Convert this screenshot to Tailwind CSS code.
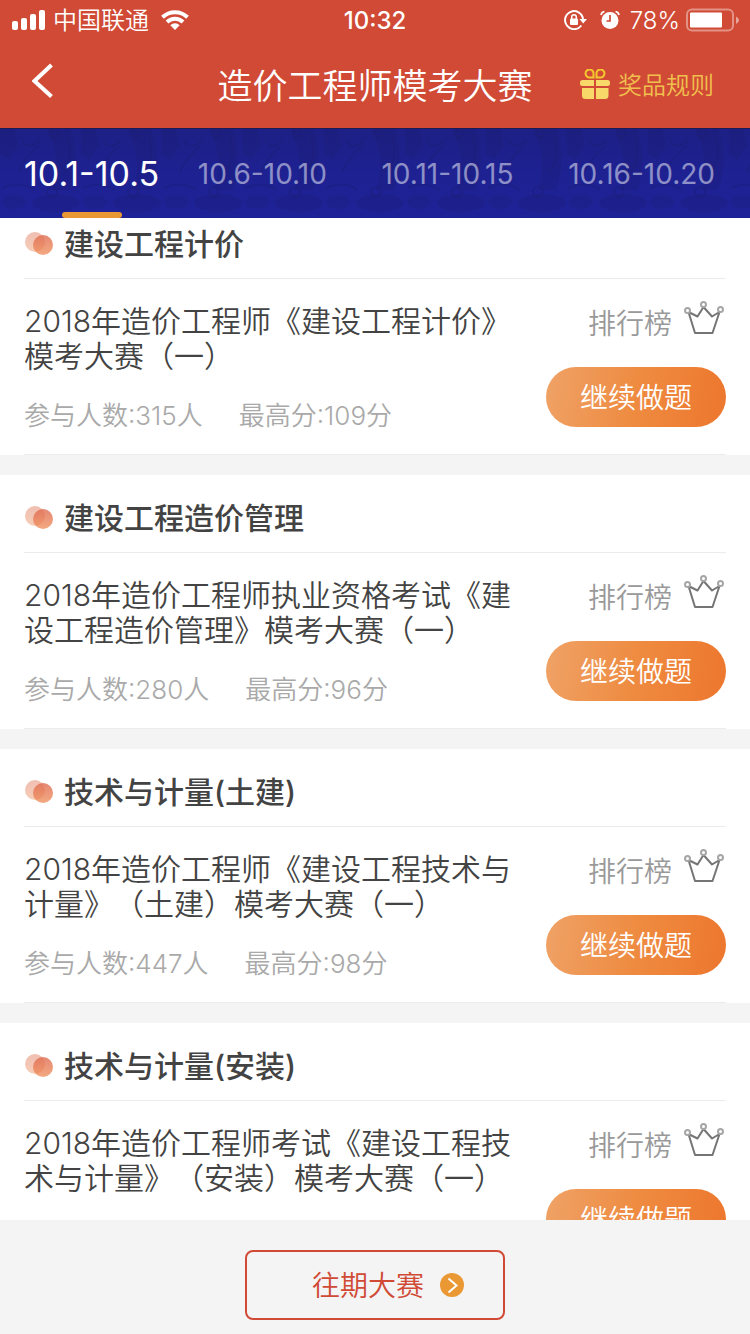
<!DOCTYPE html>
<html lang="zh-CN">
<head>
<meta charset="utf-8">
<meta name="viewport" content="width=device-width, initial-scale=1">
<title>造价工程师模考大赛</title>
<script src="https://cdn.jsdelivr.net/npm/@tailwindcss/browser@4"></script>
</head>
<body class="flex h-screen flex-col bg-[#f4f4f4] font-['Inter','Noto_Sans_CJK_SC',sans-serif] font-[350] text-[#434343] [text-spacing-trim:space-all]">

<svg class="absolute h-0 w-0" aria-hidden="true">
  <defs>
    <linearGradient id="dotA" x2="0" y2="1"><stop stop-color="#f0bfb3"/><stop offset="1" stop-color="#f6cdb6"/></linearGradient>
    <linearGradient id="dotB" x2="0" y2="1"><stop stop-color="#df6a50" stop-opacity=".8"/><stop offset="1" stop-color="#ef8b55" stop-opacity=".75"/></linearGradient>
  </defs>
  <symbol id="crown" viewBox="0 0 40 36">
    <g fill="none" stroke="#757575" stroke-width="2" stroke-linejoin="round">
      <path d="M4.500 12 L11 33 H28.500 L35.500 12 L28 16.500 L19.500 7 L13.500 16.500 Z"/>
      <g stroke="#a6a6a6" fill="#fff"><circle cx="3.500" cy="10.500" r="2.500"/><circle cx="19.500" cy="4.500" r="2.500"/><circle cx="36.500" cy="9.500" r="2.500"/></g>
    </g>
  </symbol>
  <symbol id="dots" viewBox="0 0 29 24">
    <circle cx="11" cy="10" r="10" fill="url(#dotA)"/><circle cx="19" cy="13" r="10" fill="url(#dotB)"/>
  </symbol>
</svg>

<header class="shrink-0 bg-[#d04a35] text-white">
  <div class="grid h-10 grid-cols-[1fr_auto_1fr] items-center px-3">
    <div class="flex items-center gap-2">
      <svg class="h-5 w-[33px]" viewBox="0 0 33 20" fill="#fff"><rect y="11" width="6" height="9" rx="2"/><rect x="9" y="8" width="6" height="12" rx="2"/><rect x="18" y="4" width="6" height="16" rx="2"/><rect x="27" width="6" height="20" rx="2"/></svg>
      <span class="pt-0.5 text-2xl">中国联通</span>
      <svg class="ml-1 h-5 w-7" viewBox="0 0 28 20" fill="none" stroke="#fff" stroke-width="4"><path d="M1.500 7.200 A18 18 0 0 1 26.500 7.200"/><path d="M6 12 A11.500 11.500 0 0 1 22 12"/><path d="M14 20 L9.300 15.200 A6.800 6.800 0 0 1 18.700 15.200 Z" fill="#fff" stroke="none"/></svg>
    </div>
    <span class="pt-0.5 text-2xl font-medium">10:32</span>
    <div class="flex items-center justify-end">
      <svg class="h-5 w-6" viewBox="0 0 24 20"><path d="M17.300 15.500 A9 9 0 1 1 19 9" fill="none" stroke="#fff" stroke-width="2"/><path d="M15.500 9 H23 L19.200 13.500 Z" fill="#fff"/><rect x="6" y="8.500" width="8" height="6.500" rx="1" fill="#fff"/><path d="M7.700 9 V7 a2.300 2.300 0 0 1 4.600 0 V9" fill="none" stroke="#fff" stroke-width="1.500"/></svg>
      <svg class="ml-3 h-5 w-5" viewBox="0 0 20 20"><circle cx="10" cy="10.500" r="8.500" fill="#fff"/><path d="M10 5 V11 H6.500" fill="none" stroke="#d04a35" stroke-width="1.700"/><path d="M1 5 Q1.500 2 4.500 1.500 M19 5 Q18.500 2 15.500 1.500" fill="none" stroke="#fff" stroke-width="1.700"/></svg>
      <span class="ml-2.5 pt-0.5 text-2xl">78%</span>
      <svg class="ml-1.5 -mr-px h-6 w-[53px] shrink-0" viewBox="0 0 53 24"><rect x="1" y="1.500" width="46" height="21" rx="5" fill="none" stroke="#fff" stroke-opacity=".4" stroke-width="2"/><rect x="4" y="4.500" width="32" height="15" rx="1" fill="#fff"/><path d="M50 8.500 q3 1.500 3 3.800 t-3 3.700 z" fill="#fff" fill-opacity=".5"/></svg>
    </div>
  </div>
  <div class="grid h-[88px] grid-cols-[1fr_auto_1fr] items-center px-8 pt-1">
    <button type="button" aria-label="返回" class="mb-3 w-6"><svg class="h-9 w-6" viewBox="0 0 24 36" fill="none" stroke="#fff" stroke-width="4"><path d="M19.500 3 L2.500 19 L19.500 34.500"/></svg></button>
    <h1 class="text-[35px]">造价工程师模考大赛</h1>
    <a href="#rules" class="flex items-center justify-end gap-2 pr-1 text-2xl whitespace-nowrap text-[#f0c04e]">
      <svg class="mb-1 h-[30px] w-[30px] shrink-0" viewBox="0 0 30 30"><g fill="#f8d868"><path d="M2.500 11 H14 V17 H2.500 A2.500 2.500 0 0 1 0 14.500 V13.500 A2.500 2.500 0 0 1 2.500 11 Z M16 11 H27.500 A2.500 2.500 0 0 1 30 13.500 V14.500 A2.500 2.500 0 0 1 27.500 17 H16 Z M2 19 H14 V30 H5.500 A3.500 3.500 0 0 1 2 26.500 Z M16 19 H28.500 V26.500 A3.500 3.500 0 0 1 25 30 H16 Z"/></g><g fill="none" stroke="#f5c72e" stroke-width="2"><path d="M13.500 8.500 V5 A4 4 0 1 0 9.500 8.500 Z M16.500 8.500 V5 A4 4 0 1 1 20.500 8.500 Z"/></g></svg>
      奖品规则
    </a>
  </div>
</header>

<nav class="relative h-[90px] shrink-0 bg-[#1e2299] text-white/50">
  <svg class="absolute inset-0 h-full w-full" aria-hidden="true">
    <defs>
      <linearGradient id="shade" x2="0" y2="1"><stop stop-color="#1b1c66" stop-opacity=".4"/><stop offset=".5" stop-color="#1b1c66" stop-opacity=".15"/><stop offset="1" stop-color="#1b1c66" stop-opacity=".05"/></linearGradient>
      <pattern id="wave" width="81" height="90" patternUnits="userSpaceOnUse">
        <path d="M47 0 H70 Q82 30 70 62 H52 Q62 30 47 0 Z M0 0 H14 L18 18 L8 32 L0 26 Z" fill="#1b1d70" fill-opacity=".25"/>
        <g fill="none" stroke="#1a1c78" stroke-opacity=".4" stroke-width="2"><circle cx="54" cy="6" r="4"/><path d="M22 12 Q28 24 40 12 M18 44 Q24 30 38 18 M68 10 Q74 28 64 44 M2 60 Q20 52 34 62"/><circle cx="52" cy="64" r="5"/></g>
        <ellipse cx="56" cy="75" rx="24" ry="9" fill="#1b1d70" fill-opacity=".25"/><ellipse cx="14" cy="74" rx="12" ry="7" fill="#1b1d70" fill-opacity=".2"/>
      </pattern>
    </defs>
    <rect width="100%" height="100%" fill="url(#wave)"/><rect width="100%" height="100%" fill="url(#shade)"/><rect width="100%" height="1" fill="#1b1c55"/>
  </svg>
  <div class="relative flex h-full items-stretch justify-between pr-[35px] pl-6 text-[28px] font-normal">
    <a href="#w1" aria-current="page" class="relative -mr-4 flex items-center text-[34px] text-white">10.1-10.5<span class="absolute bottom-0 left-1/2 h-1.5 w-[60px] -translate-x-1/2 rounded-sm bg-[#e99834]"></span></a>
    <a href="#w2" class="flex items-center pt-0.5">10.6-10.10</a>
    <a href="#w3" class="flex items-center pt-0.5">10.11-10.15</a>
    <a href="#w4" class="flex items-center pt-0.5">10.16-10.20</a>
  </div>
</nav>

<main class="flex min-h-0 flex-1 flex-col gap-5 overflow-y-auto [scrollbar-width:none]">
  <section class="shrink-0 bg-white px-6">
    <h2 class="flex items-center gap-[11px] border-b border-[#ececec] pt-1.5 pb-3.5 text-[30px] leading-10 font-medium"><svg class="h-6 w-[29px]"><use href="#dots"/></svg>建设工程计价</h2>
    <div class="flex justify-between border-b border-[#ececec] pb-5">
      <div class="w-[502px] pt-[25px]">
        <p class="text-[30px] leading-[35px]">2018年造价工程师《建设工程计价》模考大赛（一）</p>
        <p class="mt-6 flex gap-9 text-[26px] leading-9 text-[#a9a9a9]"><span>参与人数:315人</span><span>最高分:109分</span></p>
      </div>
      <div class="flex w-[180px] shrink-0 flex-col items-end pt-[23px]">
        <a href="#rank1" class="flex h-11 items-center gap-3 pr-0.5 text-[28px] text-[#999]">排行榜<svg class="mb-3 h-9 w-10"><use href="#crown"/></svg></a>
        <button type="button" class="mt-[21px] h-[60px] w-full rounded-full bg-linear-100 from-[#efa266] via-[#ee8b40] to-[#ed762d] pt-0.5 text-[28px] text-white">继续做题</button>
      </div>
    </div>
  </section>
  <section class="shrink-0 bg-white px-6">
    <h2 class="flex items-center gap-[11px] border-b border-[#ececec] pt-[23px] pb-3.5 text-[30px] leading-10 font-medium"><svg class="h-6 w-[29px]"><use href="#dots"/></svg>建设工程造价管理</h2>
    <div class="flex justify-between border-b border-[#ececec] pb-5">
      <div class="w-[502px] pt-[25px]">
        <p class="text-[30px] leading-[35px]">2018年造价工程师执业资格考试《建设工程造价管理》模考大赛（一）</p>
        <p class="mt-6 flex gap-9 text-[26px] leading-9 text-[#a9a9a9]"><span>参与人数:280人</span><span>最高分:96分</span></p>
      </div>
      <div class="flex w-[180px] shrink-0 flex-col items-end pt-[23px]">
        <a href="#rank2" class="flex h-11 items-center gap-3 pr-0.5 text-[28px] text-[#999]">排行榜<svg class="mb-3 h-9 w-10"><use href="#crown"/></svg></a>
        <button type="button" class="mt-[21px] h-[60px] w-full rounded-full bg-linear-100 from-[#efa266] via-[#ee8b40] to-[#ed762d] pt-0.5 text-[28px] text-white">继续做题</button>
      </div>
    </div>
  </section>
  <section class="shrink-0 bg-white px-6">
    <h2 class="flex items-center gap-[11px] border-b border-[#ececec] pt-[23px] pb-3.5 text-[30px] leading-10 font-medium"><svg class="h-6 w-[29px]"><use href="#dots"/></svg>技术与计量(土建)</h2>
    <div class="flex justify-between border-b border-[#ececec] pb-5">
      <div class="w-[502px] pt-[25px]">
        <p class="text-[30px] leading-[35px]">2018年造价工程师《建设工程技术与计量》（土建）模考大赛（一）</p>
        <p class="mt-6 flex gap-9 text-[26px] leading-9 text-[#a9a9a9]"><span>参与人数:447人</span><span>最高分:98分</span></p>
      </div>
      <div class="flex w-[180px] shrink-0 flex-col items-end pt-[23px]">
        <a href="#rank3" class="flex h-11 items-center gap-3 pr-0.5 text-[28px] text-[#999]">排行榜<svg class="mb-3 h-9 w-10"><use href="#crown"/></svg></a>
        <button type="button" class="mt-[21px] h-[60px] w-full rounded-full bg-linear-100 from-[#efa266] via-[#ee8b40] to-[#ed762d] pt-0.5 text-[28px] text-white">继续做题</button>
      </div>
    </div>
  </section>
  <section class="shrink-0 bg-white px-6">
    <h2 class="flex items-center gap-[11px] border-b border-[#ececec] pt-[23px] pb-3.5 text-[30px] leading-10 font-medium"><svg class="h-6 w-[29px]"><use href="#dots"/></svg>技术与计量(安装)</h2>
    <div class="flex justify-between pb-5">
      <div class="w-[502px] pt-[25px]">
        <p class="text-[30px] leading-[35px]">2018年造价工程师考试《建设工程技术与计量》（安装）模考大赛（一）</p>
      </div>
      <div class="flex w-[180px] shrink-0 flex-col items-end pt-[23px]">
        <a href="#rank4" class="flex h-11 items-center gap-3 pr-0.5 text-[28px] text-[#999]">排行榜<svg class="mb-3 h-9 w-10"><use href="#crown"/></svg></a>
        <button type="button" class="mt-[21px] h-[60px] w-full rounded-full bg-linear-100 from-[#efa266] via-[#ee8b40] to-[#ed762d] pt-0.5 text-[28px] text-white">继续做题</button>
      </div>
    </div>
  </section>
</main>

<footer class="flex shrink-0 justify-center pt-[30px] pb-3.5">
  <button type="button" class="flex h-[70px] w-[260px] items-center justify-end gap-4 rounded-lg border-2 border-[#d04a35] pr-[39px] text-[28px] text-[#d04a35]"><span class="pt-0.5">往期大赛</span><svg class="h-6 w-6" viewBox="0 0 24 24"><circle cx="12" cy="12" r="12" fill="#e99834"/><path d="M8.500 5.500 L16.500 12.500 L8.500 19.500" fill="none" stroke="#fff" stroke-width="2"/></svg></button>
</footer>
</body>
</html>
